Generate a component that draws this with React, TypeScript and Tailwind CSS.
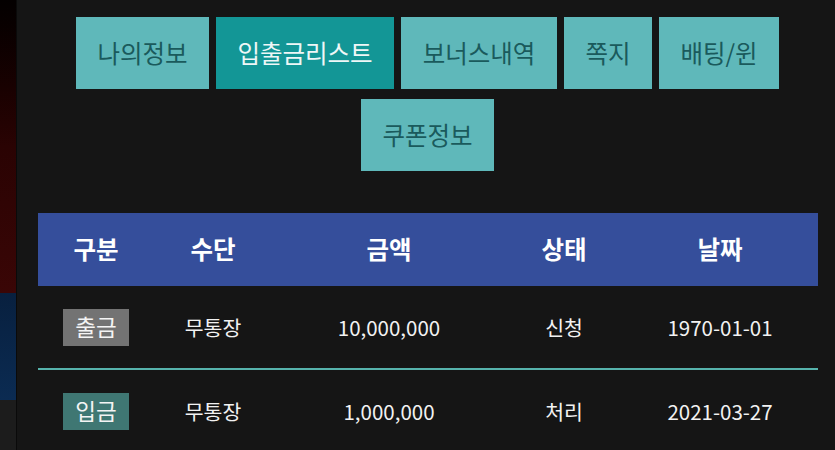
import React from "react";

const font = { fontFamily: '"Noto Sans CJK KR", "Noto Sans", sans-serif' };

const tabs = [
  { label: "나의정보", w: "w-[133px]", active: false },
  { label: "입출금리스트", w: "w-[178px]", active: true },
  { label: "보너스내역", w: "w-[156px]", active: false },
  { label: "쪽지", w: "w-[88px]", active: false },
  { label: "배팅/윈", w: "w-[120px]", active: false },
  { label: "쿠폰정보", w: "w-[133px]", active: false },
];

const rows = [
  { kind: "출금", badge: "bg-[#737373]", method: "무통장", amount: "10,000,000", status: "신청", date: "1970-01-01" },
  { kind: "입금", badge: "bg-[#3f7773]", method: "무통장", amount: "1,000,000", status: "처리", date: "2021-03-27" },
];

const cols = "grid grid-cols-[116px_118px_234px_116px_196px]";

export default function App() {
  return (
    <div className="flex w-[835px] h-[450px] overflow-hidden bg-[#151515]" style={font}>
      <div className="flex w-[17px] shrink-0 flex-col border-r border-[#0a0a0a]">
        <div className="h-[293px] bg-gradient-to-b from-[#040000] via-[#2a0303] to-[#3a0606]" />
        <div className="h-[107px] bg-gradient-to-b from-[#08203f] to-[#0b2b52]" />
        <div className="flex-1 bg-[#1c1c1c]" />
      </div>
      <div className="flex flex-1 flex-col">
        <div className="flex flex-wrap justify-center gap-x-[7px] gap-y-[10px] pl-[3px] pt-[17px]">
          {tabs.map((t) => (
            <div
              key={t.label}
              className={`${t.w} flex h-[72px] items-center justify-center text-[24.5px] ${
                t.active ? "bg-[#139696] text-[#eef7f7]" : "bg-[#5fb8ba] text-[#1a5a5c]"
              }`}
            >
              {t.label}
            </div>
          ))}
        </div>
        <div className="ml-[21px] mr-[17px] mt-[42px]">
          <div className={`${cols} h-[73px] items-center bg-[#354e9b] text-[24.5px] font-bold text-white`}>
            {["구분", "수단", "금액", "상태", "날짜"].map((h) => (
              <div key={h} className="text-center">
                {h}
              </div>
            ))}
          </div>
          {rows.map((r, i) => (
            <div
              key={i}
              className={`${cols} items-center text-[20.5px] text-[#f2f2f2] ${
                i === 0 ? "h-[84px] border-b-2 border-[#56b3ac]" : "h-[82px]"
              }`}
            >
              <div className="flex justify-center">
                <span className={`${r.badge} flex h-[37px] w-[66px] items-center justify-center text-[22.5px] text-[#f4f4f4]`}>
                  {r.kind}
                </span>
              </div>
              <div className="text-center">{r.method}</div>
              <div className="text-center">{r.amount}</div>
              <div className="text-center">{r.status}</div>
              <div className="text-center">{r.date}</div>
            </div>
          ))}
        </div>
      </div>
    </div>
  );
}
